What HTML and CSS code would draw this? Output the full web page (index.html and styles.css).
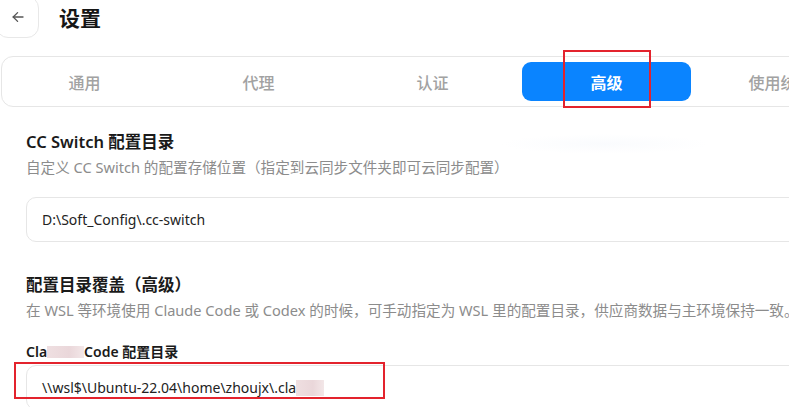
FILE: index.html
```html
<!DOCTYPE html>
<html lang="zh-CN">
<head>
<meta charset="utf-8">
<title>设置</title>
<link rel="stylesheet" href="styles.css">
</head>
<body>
<div class="page">
  <header class="topbar">
    <button class="back" type="button" aria-label="返回">
      <svg width="12" height="12" viewBox="0 0 12 12" fill="none" stroke="#555" stroke-width="1.3" stroke-linecap="round" stroke-linejoin="round">
        <path d="M11 6H1.2"/>
        <path d="M5.6 1.6 1.2 6l4.4 4.4"/>
      </svg>
    </button>
    <h1 class="title">设置</h1>
  </header>

  <nav class="tabs">
    <div class="tab-track">
      <span class="tab">通用</span>
      <span class="tab">代理</span>
      <span class="tab">认证</span>
      <span class="tab is-active">高级</span>
      <span class="tab">使用统计</span>
    </div>
  </nav>

  <section class="group">
    <h2 class="group-title">CC Switch 配置目录</h2>
    <p class="hint">自定义 CC Switch 的配置存储位置（指定到云同步文件夹即可云同步配置）</p>
    <div class="field field-first">D:\Soft_Config\.cc-switch</div>
  </section>

  <section class="group">
    <h2 class="group-title group-title-gap">配置目录覆盖（高级）</h2>
    <p class="hint">在 WSL 等环境使用 Claude Code 或 Codex 的时候，可手动指定为 WSL 里的配置目录，供应商数据与主环境保持一致。</p>
    <label class="field-label">Cla<span class="redact redact-label"></span>Code 配置目录</label>
    <div class="field field-tight">\\wsl$\Ubuntu-22.04\home\zhoujx\.cla<span class="redact redact-value"></span></div>
  </section>

  <div class="glow"></div>
  <div class="mark mark-tab"></div>
  <div class="mark mark-field"></div>
</div>
</body>
</html>
```

FILE: styles.css
```css
html, body {
  margin: 0;
  padding: 0;
  background: #ffffff;
  overflow: hidden;
}

body {
  font-family: "Noto Sans", "Noto Sans CJK SC", sans-serif;
  color: #1c1c1c;
}

.page {
  position: relative;
  width: 789px;
  height: 407px;
  overflow: hidden;
}

/* header row with back button and page title */
.topbar {
  display: flex;
  align-items: center;
  margin: -4px 0 0 -4px;
  height: 42px;
}

.back {
  flex: none;
  width: 43px;
  height: 42px;
  padding: 0;
  border: 1px solid #e8e8e8;
  border-radius: 12px;
  background: #fff;
  display: flex;
  align-items: center;
  justify-content: center;
}

.title {
  margin: 0 0 0 20px;
  font-size: 21px;
  font-weight: 700;
  line-height: 28px;
  color: #161616;
  font-family: "Noto Sans CJK SC", sans-serif;
}

/* segmented tab bar */
.tabs {
  margin: 18px 0 0 1px;
  width: 900px;
  border: 1px solid #e6e6e6;
  border-radius: 12px;
  padding: 5px 0;
  overflow: hidden;
}

.tab-track {
  display: flex;
  gap: 5px;
  margin-left: -2px;
}

.tab {
  flex: none;
  width: 169px;
  height: 39px;
  border-radius: 9px;
  display: flex;
  align-items: center;
  justify-content: center;
  font-family: "Noto Sans CJK SC", sans-serif;
  font-size: 16px;
  font-weight: 500;
  color: #a2a2a2;
}

.tab.is-active {
  background: #0a84ff;
  color: #ffffff;
  font-weight: 600;
}

/* settings groups */
.group {
  padding-left: 26px;
}

.group-title {
  margin: 24px 0 0;
  font-size: 16.5px;
  line-height: 22px;
  font-weight: 600;
  color: #1a1a1a;
}

.group-title-gap {
  margin-top: 32px;
}

.hint {
  margin: 4px 0 0;
  font-size: 14.6px;
  line-height: 20px;
  color: #8c8c8c;
  white-space: nowrap;
}

.field {
  width: 900px;
  height: 45px;
  box-sizing: border-box;
  border: 1px solid #e6e6e6;
  border-radius: 10px;
  padding: 0 15px;
  display: flex;
  align-items: center;
  font-size: 14px;
  color: #222;
}

.field-first {
  margin-top: 20px;
}

.field-label {
  display: block;
  margin-top: 22px;
  font-size: 14px;
  line-height: 20px;
  font-weight: 600;
  color: #1a1a1a;
}

.field-tight {
  margin-top: 3px;
}

/* pink privacy blocks over part of the text */
.redact {
  display: inline-block;
  vertical-align: middle;
  background: linear-gradient(90deg, #efdfe1, #ead7da 60%, #f3e7e8);
}

.redact-label {
  width: 37px;
  height: 12px;
  margin-top: -2px;
}

.redact-value {
  width: 28px;
  height: 16px;
}

.glow {
  position: absolute;
  left: 500px;
  top: 134px;
  width: 210px;
  height: 20px;
  border-radius: 50%;
  background: radial-gradient(ellipse at center, rgba(225, 233, 246, 0.18), rgba(255, 255, 255, 0) 70%);
}

/* red annotation frames */
.mark {
  position: absolute;
  border: 2px solid #e3232d;
  box-sizing: border-box;
}

.mark-tab {
  left: 563px;
  top: 50px;
  width: 88px;
  height: 58px;
}

.mark-field {
  left: 14px;
  top: 362px;
  width: 371px;
  height: 37px;
}
```
